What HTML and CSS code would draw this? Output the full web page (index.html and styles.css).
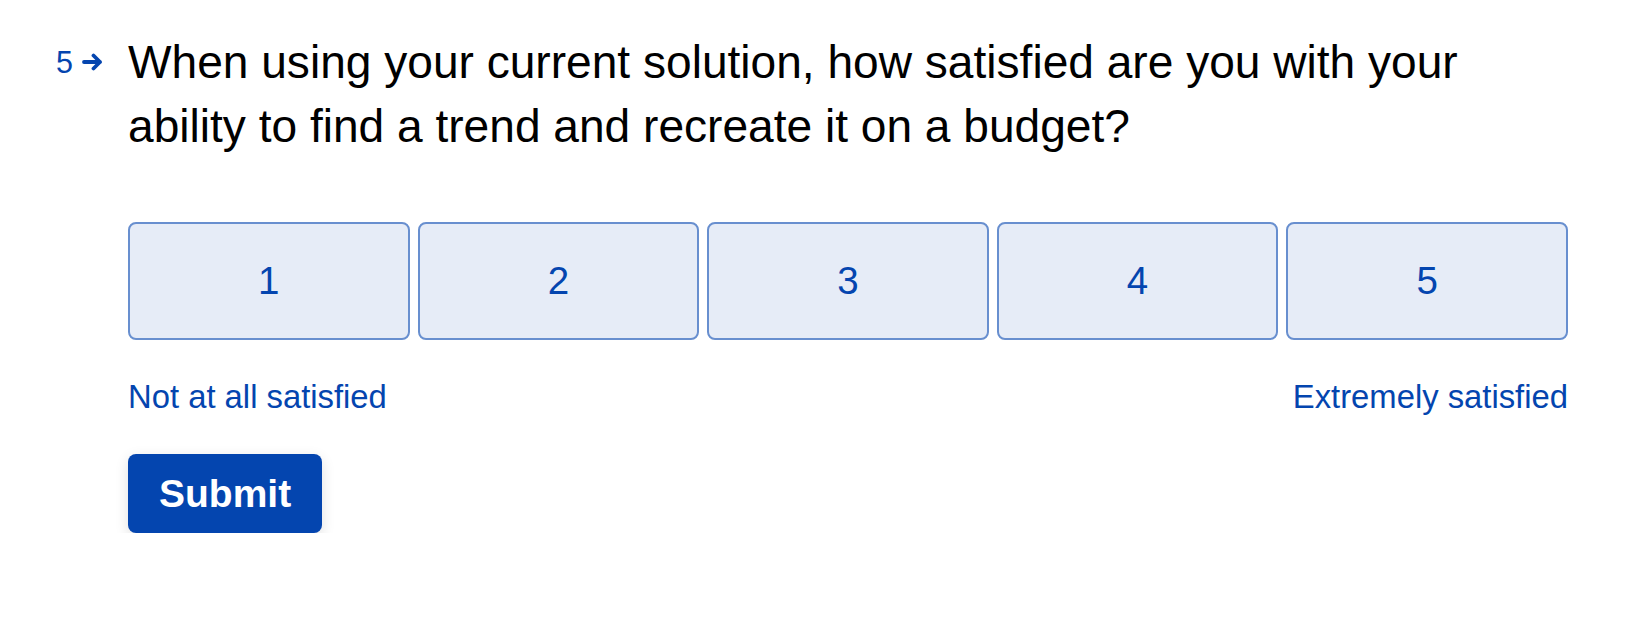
FILE: index.html
```html
<!DOCTYPE html>
<html lang="en">
<head>
<meta charset="utf-8">
<title>Question 5</title>
<link rel="stylesheet" href="styles.css">
</head>
<body>
<main class="page">
  <div class="question">
    <div class="q-index">
      <span class="q-num">5</span>
      <svg class="q-arrow" width="21" height="18" viewBox="0 0 21 18" aria-hidden="true">
        <path d="M2 9 H18 M11.5 2.5 L18 9 L11.5 15.5" fill="none" stroke="#0445AF" stroke-width="3.8" stroke-linecap="round" stroke-linejoin="round"/>
      </svg>
    </div>
    <div class="q-body">
      <h1 class="q-title">When using your current solution, how satisfied are you with your ability to find a trend and recreate it on a budget?</h1>
      <div class="scale">
        <button class="scale-btn">1</button>
        <button class="scale-btn">2</button>
        <button class="scale-btn">3</button>
        <button class="scale-btn">4</button>
        <button class="scale-btn">5</button>
      </div>
      <div class="scale-labels">
        <span>Not at all satisfied</span>
        <span>Extremely satisfied</span>
      </div>
      <button class="submit">Submit</button>
    </div>
  </div>
</main>
</body>
</html>
```
FILE: styles.css
```css
html, body {
  margin: 0;
  padding: 0;
  background: #ffffff;
}
body {
  font-family: "Liberation Sans", Arial, sans-serif;
  color: #000000;
}
.page {
  padding-top: 31px;
}
.question {
  display: grid;
  grid-template-columns: 128px 1440px;
}
.q-index {
  display: flex;
  justify-content: flex-end;
  align-items: center;
  gap: 9px;
  padding-right: 25px;
  padding-top: 16px;
  align-self: start;
  color: #0445AF;
}
.q-num {
  font-size: 30.5px;
  line-height: 30px;
}
.q-arrow {
  display: block;
}
.q-title {
  margin: 0;
  font-size: 46.1px;
  font-weight: 400;
  line-height: 63.5px;
  max-width: 1400px;
}
.scale {
  display: flex;
  gap: 8px;
  margin-top: 64px;
}
.scale-btn {
  flex: 1;
  height: 118px;
  border: 2px solid #688FCF;
  border-radius: 8px;
  background: #E6ECF7;
  color: #0445AF;
  font-family: inherit;
  font-size: 38.5px;
  padding: 0;
}
.scale-labels {
  display: flex;
  justify-content: space-between;
  margin-top: 37px;
  font-size: 32.8px;
  line-height: 40px;
  color: #0445AF;
}
.submit {
  margin-top: 37px;
  height: 79px;
  padding: 0 31px;
  border: none;
  border-radius: 8px;
  background: #0445AF;
  color: #ffffff;
  font-family: inherit;
  font-size: 39px;
  font-weight: 700;
  box-shadow: 0 4px 14px rgba(0, 0, 0, 0.12);
}
```
